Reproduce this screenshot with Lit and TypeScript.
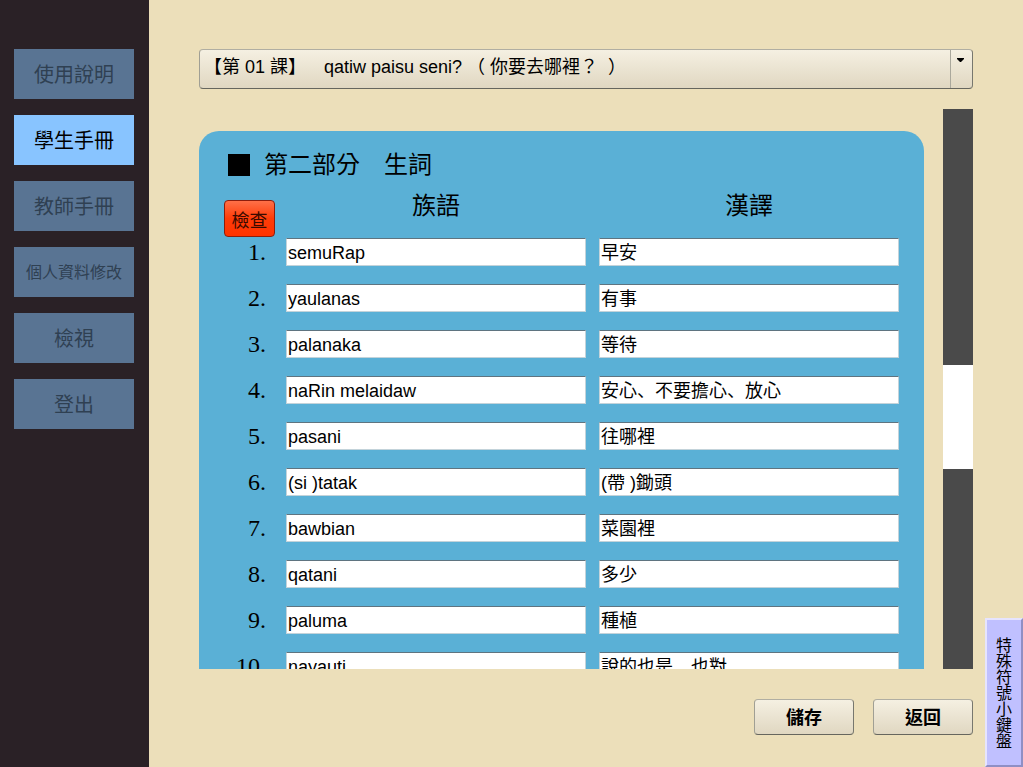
import { LitElement, html, css } from "lit";
import { customElement, state } from "lit/decorators.js";
import { classMap } from "lit/directives/class-map.js";

interface Word {
  native: string;
  chinese: string;
}

const NAV = ["使用說明", "學生手冊", "教師手冊", "個人資料修改", "檢視", "登出"];

const LESSONS = ["【第 01 課】\u3000qatiw paisu seni?\u0020（ 你要去哪裡？\u00a0\u0020）"];

const WORDS: Word[] = [
  { native: "semuRap", chinese: "早安" },
  { native: "yaulanas", chinese: "有事" },
  { native: "palanaka", chinese: "等待" },
  { native: "naRin melaidaw", chinese: "安心、不要擔心、放心" },
  { native: "pasani", chinese: "往哪裡" },
  { native: "(si )tatak", chinese: "(帶 )鋤頭" },
  { native: "bawbian", chinese: "菜園裡" },
  { native: "qatani", chinese: "多少" },
  { native: "paluma", chinese: "種植" },
  { native: "nayauti", chinese: "說的也是、也對" },
];

@customElement("word-table")
export class WordTable extends LitElement {
  static styles = css`
    :host {
      display: block;
    }
    .panel {
      padding: 14px 25px 18px;
      border-radius: 20px 20px 0 0;
      background: #5ab0d6;
    }
    .title {
      display: flex;
      align-items: center;
      gap: 14px;
      margin: 0;
      padding-left: 4px;
      font-size: 24px;
      font-weight: 400;
      line-height: 40px;
    }
    .marker {
      width: 22px;
      height: 22px;
      background: #000;
    }
    .words,
    .head,
    .body {
      display: block;
    }
    .row {
      display: grid;
      grid-template-columns: 49px 1fr 1fr;
      column-gap: 13px;
      margin-bottom: 18px;
    }
    .head .row {
      height: 53px;
      margin-bottom: 0;
    }
    .cell {
      display: block;
      min-width: 0;
      padding: 0;
    }
    .heading {
      font-size: 24px;
      font-weight: 400;
      line-height: 42px;
      text-align: center;
    }
    .number {
      padding-right: 7px;
      font: 24px/28px "Liberation Serif", serif;
      text-align: right;
    }
    .check {
      width: 51px;
      height: 37px;
      margin-top: 15px;
      padding: 0;
      border: 1px solid #8e1d0c;
      border-radius: 4px;
      background: linear-gradient(#ff7048, #ff3c08 50%, #ff3300);
      color: #3a0a00;
      font: inherit;
      font-size: 18px;
    }
    .field {
      display: block;
      box-sizing: border-box;
      width: 100%;
      height: 28px;
      margin: 0;
      padding: 2px 1px 0;
      border: 1px solid #c3d3da;
      border-top-color: #5f7480;
      border-radius: 0;
      background: #fff;
      color: #000;
      font: 18px "Liberation Sans", sans-serif;
      outline: none;
    }
    .field.chinese {
      padding: 0 1px 2px;
      font-family: "Liberation Sans", "Noto Sans CJK JP", sans-serif;
    }
  `;

  render() {
    return html`
      <section class="panel">
        <h2 class="title"><span class="marker"></span>第二部分　生詞</h2>
        <table class="words">
          <thead class="head">
            <tr class="row">
              <td class="cell"><button class="check" type="button">檢查</button></td>
              <th class="cell heading" scope="col">族語</th>
              <th class="cell heading" scope="col">漢譯</th>
            </tr>
          </thead>
          <tbody class="body">
            ${WORDS.map(
              (word, i) => html`
                <tr class="row">
                  <th class="cell number" scope="row">${i + 1}.</th>
                  <td class="cell">
                    <input class="field" type="text" aria-label="族語 ${i + 1}" .value=${word.native} />
                  </td>
                  <td class="cell">
                    <input class="field chinese" type="text" aria-label="漢譯 ${i + 1}" .value=${word.chinese} />
                  </td>
                </tr>
              `
            )}
          </tbody>
        </table>
      </section>
    `;
  }
}

@customElement("app-root")
export class AppRoot extends LitElement {
  static styles = css`
    :host {
      display: flex;
      height: 100vh;
      overflow: hidden;
      background: #ecdfba;
      color: #000;
      font-family: "Liberation Sans", "Noto Sans CJK TC", sans-serif;
      text-spacing-trim: space-all;
    }
    .sidebar {
      display: flex;
      flex: none;
      flex-direction: column;
      gap: 16px;
      box-sizing: border-box;
      width: 149px;
      padding: 49px 15px 0 14px;
      background: #2a2126;
    }
    .nav {
      height: 50px;
      padding: 0 0 2px;
      border: 0;
      background: #597493;
      color: #2f4052;
      font: inherit;
      font-size: 20px;
      white-space: nowrap;
    }
    .nav.long {
      font-size: 16px;
    }
    .nav.active {
      background: #88c4ff;
      color: #000;
    }
    .main {
      display: flex;
      flex: 1;
      flex-direction: column;
      min-width: 0;
      padding: 49px 50px 32px;
    }
    .lesson {
      display: grid;
      margin-bottom: 20px;
    }
    .select,
    .button {
      border: 1px solid;
      border-color: #b0aea2 #77776e #66665e #a09f94;
      border-radius: 4px;
      background: linear-gradient(#f5f0e2, #e0d7c1);
      color: #000;
      font: inherit;
      font-size: 18px;
    }
    .select {
      grid-area: 1 / 1;
      width: 100%;
      height: 40px;
      padding: 0 30px 4px 4px;
      appearance: none;
    }
    .drop {
      grid-area: 1 / 1;
      justify-self: end;
      width: 23px;
      height: 40px;
      pointer-events: none;
    }
    .content {
      display: flex;
      flex: 1;
      gap: 19px;
      min-height: 0;
    }
    .viewport {
      flex: 1;
      min-width: 0;
      padding-top: 22px;
      overflow: hidden;
    }
    .track {
      display: grid;
      grid-template-rows: 256fr 104fr 200fr;
      flex: none;
      width: 30px;
      background: #4a4a4a;
    }
    .thumb {
      grid-row: 2;
      background: #fff;
    }
    .actions {
      display: flex;
      justify-content: flex-end;
      gap: 19px;
      margin-top: 30px;
    }
    .button {
      width: 100px;
      height: 36px;
      padding: 0 0 2px;
      font-weight: 700;
    }
    .keyboard {
      position: absolute;
      right: 0;
      bottom: 0;
      box-sizing: border-box;
      width: 38px;
      height: 149px;
      padding: 0 4px 0 0;
      border: 2px solid;
      border-color: #e6e4ff #8f8fc4 #8f8fc4 #e6e4ff;
      background: #c0c0ff;
      color: #000;
      font: inherit;
      font-size: 16px;
      writing-mode: vertical-rl;
    }
  `;

  @state() private active = 1;

  render() {
    return html`
      <nav class="sidebar">
        ${NAV.map(
          (label, i) => html`
            <button
              type="button"
              class=${classMap({ nav: true, long: label.length > 4, active: i === this.active })}
              @click=${() => (this.active = i)}
            >${label}</button>
          `
        )}
      </nav>
      <main class="main">
        <div class="lesson">
          <select class="select" aria-label="課程">
            ${LESSONS.map((lesson) => html`<option>${lesson}</option>`)}
          </select>
          <svg class="drop" viewBox="0 0 23 40" aria-hidden="true">
            <path d="M0.5 1V39" stroke="#aaa89c" />
            <path d="M7 9H14V10L11 13H10L7 10Z" fill="#000" />
          </svg>
        </div>
        <div class="content">
          <div class="viewport" id="viewport"><word-table></word-table></div>
          <div
            class="track"
            role="scrollbar"
            aria-controls="viewport"
            aria-orientation="vertical"
            aria-valuenow="56"
          >
            <div class="thumb"></div>
          </div>
        </div>
        <div class="actions">
          <button class="button" type="button">儲存</button>
          <button class="button" type="button">返回</button>
        </div>
      </main>
      <button class="keyboard" type="button">特殊符號小鍵盤</button>
    `;
  }
}
